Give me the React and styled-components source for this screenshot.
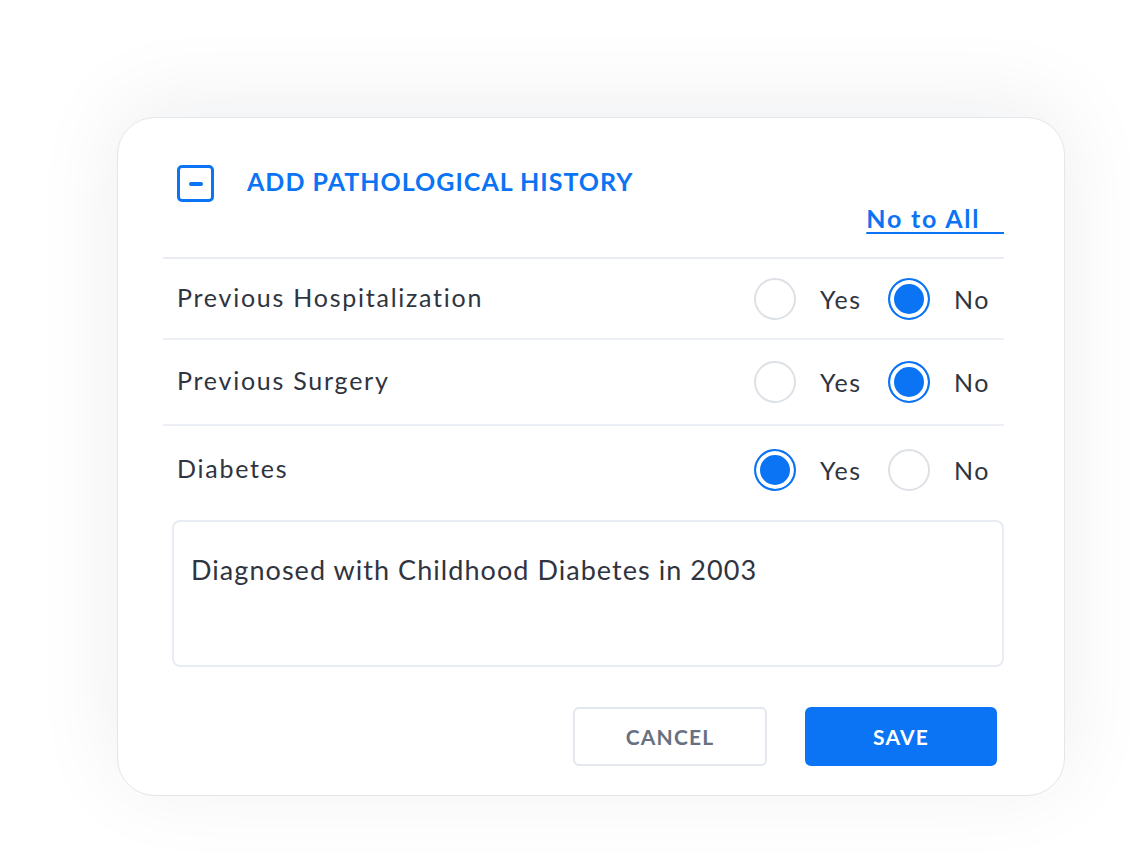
import React, { useState } from 'react';
import styled, { createGlobalStyle } from 'styled-components';

const GlobalStyle = createGlobalStyle`
  body {
    margin: 0;
    background: #ffffff;
    font-family: 'Lato', 'Open Sans', sans-serif;
  }
`;

const BLUE = '#0b74f4';

const rows = [
  { id: 'hosp', label: 'Previous Hospitalization' },
  { id: 'surg', label: 'Previous Surgery' },
  { id: 'diab', label: 'Diabetes' },
];

const App = () => {
  const [answers, setAnswers] = useState({ hosp: 'no', surg: 'no', diab: 'yes' });
  const [note, setNote] = useState('Diagnosed with Childhood Diabetes in 2003');

  const onNoToAll = () => {
    setAnswers({ hosp: 'no', surg: 'no', diab: 'no' });
  };

  return (
    <>
      <GlobalStyle />
      <StyledPage>
        <StyledCard>
          <StyledHeader>
            <StyledTitleRow>
              <StyledCollapse>
                <span />
              </StyledCollapse>
              <StyledTitle>ADD PATHOLOGICAL HISTORY</StyledTitle>
            </StyledTitleRow>
            <StyledLinkRow>
              <StyledLink onClick={onNoToAll}>No to All&nbsp;&nbsp;&nbsp;</StyledLink>
            </StyledLinkRow>
          </StyledHeader>

          {rows.map((row, i) => (
            <StyledRow key={row.id} $height={[79, 84, 88][i]} $last={i === rows.length - 1}>
              <StyledLabel>{row.label}</StyledLabel>
              <StyledOptions>
                {['yes', 'no'].map(v => (
                  <StyledOption key={v} onClick={() => setAnswers({ ...answers, [row.id]: v })}>
                    <StyledRadio $checked={answers[row.id] === v} />
                    <span>{v === 'yes' ? 'Yes' : 'No'}</span>
                  </StyledOption>
                ))}
              </StyledOptions>
            </StyledRow>
          ))}

          <StyledNote value={note} onChange={e => setNote(e.target.value)} />

          <StyledButtons>
            <StyledButton>CANCEL</StyledButton>
            <StyledButton $primary>SAVE</StyledButton>
          </StyledButtons>
        </StyledCard>
      </StyledPage>
    </>
  );
};

const StyledPage = styled.div`
  width: 1130px;
  height: 863px;
  padding: 117px 0 0 117px;
  box-sizing: border-box;
`;

const StyledCard = styled.div`
  width: 948px;
  height: 679px;
  box-sizing: border-box;
  padding: 0 60px 0 45px;
  background: #ffffff;
  border: 1px solid #e3e6ea;
  border-radius: 38px;
  box-shadow: 0 -12px 90px rgba(20, 30, 50, 0.07);
  display: flex;
  flex-direction: column;
`;

const StyledHeader = styled.div`
  padding: 47px 0 0 14px;
  height: 141px;
  box-sizing: border-box;
  border-bottom: 2px solid #e9edf3;
`;

const StyledTitleRow = styled.div`
  display: flex;
  align-items: center;
  gap: 33px;
`;

const StyledCollapse = styled.div`
  width: 37px;
  height: 37px;
  box-sizing: border-box;
  border: 3.5px solid ${BLUE};
  border-radius: 5px;
  display: flex;
  align-items: center;
  justify-content: center;

  span {
    width: 14px;
    height: 4px;
    border-radius: 2px;
    background: ${BLUE};
  }
`;

const StyledTitle = styled.div`
  font-size: 25px;
  font-weight: 700;
  color: ${BLUE};
  letter-spacing: 1px;
  margin-top: -5px;
`;

const StyledLinkRow = styled.div`
  display: flex;
  justify-content: flex-end;
  margin-top: 1px;
`;

const StyledLink = styled.a`
  font-size: 25px;
  font-weight: 700;
  color: ${BLUE};
  letter-spacing: 1.8px;
  text-decoration: underline;
  text-underline-offset: 4px;
  text-decoration-thickness: 2px;
  cursor: pointer;
`;

const StyledRow = styled.div`
  display: flex;
  align-items: center;
  justify-content: space-between;
  height: ${p => p.$height}px;
  padding: 0 3px 0 14px;
  border-bottom: ${p => (p.$last ? 'none' : '2px solid #eceff5')};
`;

const StyledLabel = styled.div`
  font-size: 25px;
  color: #2f3440;
  letter-spacing: 1.75px;
  margin-top: -4px;
`;

const StyledOptions = styled.div`
  display: flex;
  align-items: center;
  gap: 21px;
`;

const StyledOption = styled.div`
  display: flex;
  align-items: center;
  gap: 24px;
  font-size: 25px;
  color: #2f3440;
  letter-spacing: 1.6px;
  cursor: pointer;

  span {
    width: 47px;
  }
`;

const StyledRadio = styled.div`
  width: 42px;
  height: 42px;
  box-sizing: border-box;
  border-radius: 50%;
  border: 2px solid ${p => (p.$checked ? BLUE : '#dde1e6')};
  background: ${p => (p.$checked ? BLUE : '#ffffff')};
  box-shadow: ${p => (p.$checked ? 'inset 0 0 0 4px #ffffff' : 'none')};
`;

const StyledNote = styled.textarea`
  margin: 6px 0 0 9px;
  height: 147px;
  box-sizing: border-box;
  padding: 31px 17px;
  border: 2px solid #e8ecf3;
  border-radius: 8px;
  font-family: 'Lato', 'Open Sans', sans-serif;
  font-size: 27px;
  letter-spacing: 1.05px;
  color: #2f3440;
  resize: none;
  outline: none;
`;

const StyledButtons = styled.div`
  display: flex;
  justify-content: flex-end;
  gap: 38px;
  margin-top: 40px;
  padding-right: 7px;
`;

const StyledButton = styled.button`
  width: ${p => (p.$primary ? '192px' : '194px')};
  height: 59px;
  border-radius: 6px;
  border: 2px solid ${p => (p.$primary ? BLUE : '#e3e7ee')};
  background: ${p => (p.$primary ? BLUE : '#ffffff')};
  color: ${p => (p.$primary ? '#ffffff' : '#69707f')};
  font-family: 'Lato', 'Open Sans', sans-serif;
  font-size: 21px;
  font-weight: 700;
  letter-spacing: 1.2px;
  cursor: pointer;
`;

export default App;
